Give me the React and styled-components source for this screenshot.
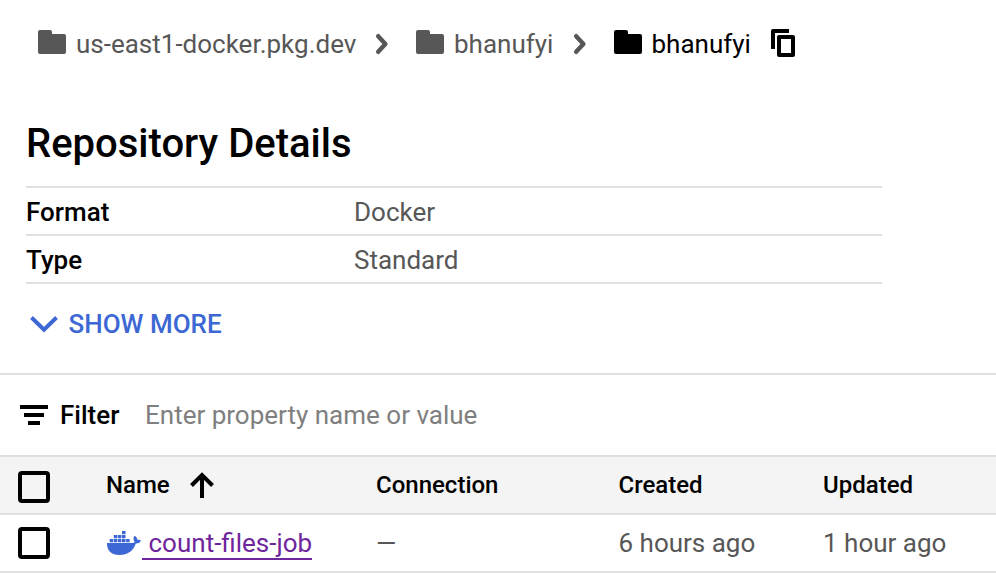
import React from "react";
import styled, { createGlobalStyle } from "styled-components";

const GlobalStyle = createGlobalStyle`
  * { box-sizing: border-box; }
  body {
    margin: 0;
    background: #fff;
    font-family: Roboto, "Liberation Sans", sans-serif;
    font-size: 26px;
    color: #000;
    overflow: hidden;
  }
`;

const Page = styled.main`
  width: 996px;
  height: 574px;
  display: flex;
  flex-direction: column;
  overflow: hidden;
`;

const Breadcrumbs = styled.nav`
  display: flex;
  align-items: center;
  height: 88px;
  padding-left: 38px;
`;

const Crumb = styled.span`
  display: flex;
  align-items: center;
  width: ${(p) => p.$width}px;
  gap: ${(p) => (p.$active ? 9.5 : 10)}px;
  white-space: nowrap;
  color: ${(p) => (p.$active ? "#000" : "#575757")};
`;

const Icon = styled.svg`
  display: block;
  flex: none;
  overflow: visible;
`;

const FolderGlyph = styled(Icon)`
  margin-bottom: 4px;
`;

const Separator = styled(Icon)`
  margin-right: 28px;
`;

const CopyButton = styled.button`
  border: 0;
  padding: 0;
  background: none;
  color: #000;
  margin-bottom: 2px;
`;

const Details = styled.section`
  height: 285px;
  padding-left: 26px;
`;

const Title = styled.h1`
  margin: 0;
  height: 98px;
  padding-top: 32px;
  font-size: 40px;
  line-height: 48px;
  font-weight: 500;
  white-space: nowrap;
`;

const Properties = styled.dl`
  margin: 0;
  width: 856px;
  border-top: 2px solid #e0e0e0;
`;

const Property = styled.div`
  display: grid;
  grid-template-columns: 328px 1fr;
  height: 48px;
  padding-top: 2px;
  line-height: 44px;
  border-bottom: 2px solid #e0e0e0;
`;

const Term = styled.dt`
  font-weight: 500;
`;

const Value = styled.dd`
  margin: 0;
  color: #575757;
`;

const ShowMore = styled.button`
  display: flex;
  align-items: center;
  gap: 10.5px;
  margin: 24px 0 0 4px;
  height: 32px;
  padding: 0;
  border: 0;
  background: none;
  font: 500 26px/32px Roboto, sans-serif;
  color: #3c67d4;
`;

const FilterBar = styled.div`
  display: flex;
  align-items: center;
  height: 82px;
  padding-left: 20px;
  border-top: 2px solid #e0e0e0;
`;

const FilterLabel = styled.span`
  width: 85px;
  margin-left: 12px;
  font-weight: 500;
`;

const FilterInput = styled.input`
  flex: 1;
  height: 40px;
  padding: 0;
  border: 0;
  outline: 0;
  background: none;
  font: 400 26px Roboto, sans-serif;
  &::placeholder {
    color: #7f7f7f;
    opacity: 1;
  }
`;

const Row = styled.div`
  display: grid;
  grid-template-columns: 88px 270px 242.5px 204.5px 1fr;
  align-items: center;
  height: 58px;
  padding-left: 18px;
  border-top: 2px solid #e0e0e0;
  color: #575757;
`;

const HeaderRow = styled(Row)`
  background: #f4f4f4;
  font-size: 24px;
  font-weight: 500;
  color: #000;
`;

const Cell = styled.div`
  display: flex;
  align-items: center;
  white-space: nowrap;
  gap: ${(p) => p.$gap || 0}px;
`;

const ImageCell = styled(Cell)`
  padding-left: 1px;
`;

const Checkbox = styled.input`
  appearance: none;
  width: 32px;
  height: 32px;
  margin: ${(p) => (p.$header ? "4px 0 0" : "0")};
  border: 4px solid #000;
  border-radius: 4px;
  background: transparent;
`;

const ImageLink = styled.a`
  height: 32px;
  padding-left: 6.5px;
  margin: 2px 0 0 1px;
  line-height: 30px;
  color: #6f259c;
  border-bottom: 2px solid #6f259c;
`;

const TableEnd = styled.div`
  height: 2px;
  background: #e0e0e0;
`;

function Folder() {
  return (
    <FolderGlyph width="28" height="24" viewBox="0 0 28 24" fill="currentColor">
      <path d="M2 0h10q2 0 2 2v2h12q2 0 2 2v16q0 2-2 2H2q-2 0-2-2V2Q0 0 2 0z" />
    </FolderGlyph>
  );
}

function ChevronRight() {
  return (
    <Separator width="12" height="20" viewBox="0 0 12 20" fill="none" stroke="#575757" strokeWidth="4.4">
      <path d="M2.200 2.200L9.400 10l-7.200 7.800" strokeLinejoin="round" strokeLinecap="round" />
    </Separator>
  );
}

function Whale() {
  return (
    <Icon width="34" height="24" viewBox="0 0 34 24" fill="#3c67d4">
      <path d="M0 12h25.2c1.2 0 2-.3 2.6-.9-1.700-2-1.600-4.400-.4-6.300 2 1.100 2.800 2.300 2.900 4 1.400-.2 2.700 0 3.700.7-.8 2-2.500 3.100-5.200 3C26.200 20 20.800 24 12.500 24 4.300 24-.2 19.600 0 12z" />
      <path d="M2.700 8h3.500v3.300H2.700zM6.800 8h3.500v3.300H6.800zM10.900 8h3.500v3.300H10.900zM15 8h3.500v3.300H15zM19.100 8h3.500v3.300H19.100zM6.800 4h3.500v3.300H6.800zM10.900 4h3.500v3.300H10.900zM15 4h3.500v3.300H15zM15 0h3.500v3.300H15z" />
    </Icon>
  );
}

export default function App() {
  return (
    <>
      <GlobalStyle />
      <Page>
        <Breadcrumbs>
          <Crumb $width={338}><Folder />us-east1-docker.pkg.dev</Crumb>
          <ChevronRight />
          <Crumb $width={158}><Folder />bhanufyi</Crumb>
          <ChevronRight />
          <Crumb $width={157} $active><Folder />bhanufyi</Crumb>
          <CopyButton aria-label="Copy">
            <Icon width="24" height="28" viewBox="0 0 24 28" fill="none" stroke="currentColor" strokeWidth="4">
              <path d="M18 2H2v18" strokeLinejoin="round" />
              <rect x="8" y="8" width="14" height="18" strokeLinejoin="round" />
            </Icon>
          </CopyButton>
        </Breadcrumbs>
        <Details>
          <Title>Repository Details</Title>
          <Properties>
            <Property><Term>Format</Term><Value>Docker</Value></Property>
            <Property><Term>Type</Term><Value>Standard</Value></Property>
          </Properties>
          <ShowMore>
            <Icon width="28" height="17" viewBox="0 0 28 17" fill="none" stroke="currentColor" strokeWidth="4">
              <path d="M1.500 1.500L14 13.600 26.500 1.500" />
            </Icon>
            SHOW MORE
          </ShowMore>
        </Details>
        <FilterBar>
          <Icon width="28" height="20" viewBox="0 0 28 20" fill="#000">
            <path d="M0 0h28v4H0zM4 8h20v4H4zM8 16h12v4H8z" />
          </Icon>
          <FilterLabel>Filter</FilterLabel>
          <FilterInput placeholder="Enter property name or value" />
        </FilterBar>
        <HeaderRow>
          <Checkbox type="checkbox" $header />
          <Cell $gap={20}>
            Name
            <Icon width="24" height="26" viewBox="0 0 24 26" fill="none" stroke="#000" strokeWidth="4">
              <path d="M12 26V3M1.500 13.500L12 3l10.500 10.500" />
            </Icon>
          </Cell>
          <Cell>Connection</Cell>
          <Cell>Created</Cell>
          <Cell>Updated</Cell>
        </HeaderRow>
        <Row>
          <Checkbox type="checkbox" />
          <ImageCell><Whale /><ImageLink>count-files-job</ImageLink></ImageCell>
          <Cell>—</Cell>
          <Cell>6 hours ago</Cell>
          <Cell>1 hour ago</Cell>
        </Row>
        <TableEnd />
      </Page>
    </>
  );
}
